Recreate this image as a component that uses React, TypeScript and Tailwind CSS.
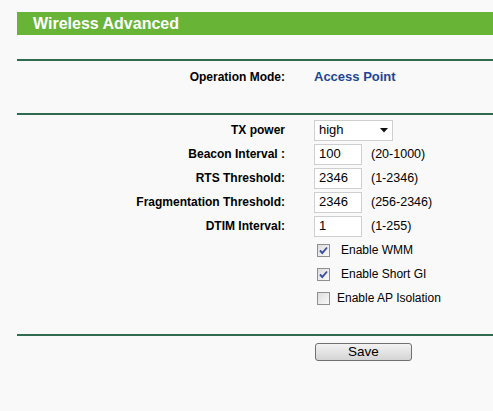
import React from "react";

const labelCls =
  "text-right text-[12px] font-bold text-black leading-[14px]";

function Input({ value }: { value: string }) {
  return (
    <div className="w-[48px] h-[21px] bg-white border border-[#cfcfcf] flex items-center pl-[4px] text-[13px] text-black">
      {value}
    </div>
  );
}

function Check({ checked }: { checked: boolean }) {
  return (
    <div className="w-[13px] h-[13px] border border-[#8f8f8f] bg-gradient-to-br from-[#dcdcdc] to-[#fafafa] flex items-center justify-center">
      {checked && (
        <svg width="11" height="11" viewBox="0 0 11 11">
          <path
            d="M2 5.5 L4.3 8 L9 2.5"
            fill="none"
            stroke="#3d4f9c"
            strokeWidth="1.9"
          />
        </svg>
      )}
    </div>
  );
}

export default function App() {
  const rows: { label: string; value: string; range: string }[] = [
    { label: "Beacon Interval :", value: "100", range: "(20-1000)" },
    { label: "RTS Threshold:", value: "2346", range: "(1-2346)" },
    { label: "Fragmentation Threshold:", value: "2346", range: "(256-2346)" },
    { label: "DTIM Interval:", value: "1", range: "(1-255)" },
  ];
  return (
    <div
      className="w-[493px] h-[411px] bg-[#f9f9f9] pl-[17px] pt-[12px] overflow-hidden"
      style={{ fontFamily: '"Liberation Sans", Arial, sans-serif' }}
    >
      <div className="h-[23px] bg-[#67b437] flex items-center pl-[16px] text-white text-[16px] font-bold">
        Wireless Advanced
      </div>
      <div className="mt-[24px] h-[2px] bg-[#2f6b4f]" />
      <div className="grid grid-cols-[268px_1fr] gap-x-[29px] h-[32px] items-center">
        <div className={labelCls}>Operation Mode:</div>
        <div className="text-[13px] font-bold text-[#1d4596]">Access Point</div>
      </div>
      <div className="mt-[20px] h-[2px] bg-[#2f6b4f]" />
      <div className="pt-[3px]">
        <div className="grid grid-cols-[268px_1fr] gap-x-[29px] h-[24px] items-center">
          <div className={labelCls}>TX power</div>
          <div className="w-[79px] h-[21px] bg-white border border-[#cfcfcf] flex items-center justify-between pl-[4px] pr-[4px] text-[13px] text-black">
            <span>high</span>
            <svg width="8" height="5" viewBox="0 0 8 5">
              <path d="M0 0 L8 0 L4 4.5 Z" fill="#111" />
            </svg>
          </div>
        </div>
        {rows.map((r) => (
          <div
            key={r.label}
            className="grid grid-cols-[268px_1fr] gap-x-[29px] h-[24px] items-center"
          >
            <div className={labelCls}>{r.label}</div>
            <div className="flex items-center gap-[9px]">
              <Input value={r.value} />
              <span className="text-[12.5px] text-black">{r.range}</span>
            </div>
          </div>
        ))}
        <div className="grid grid-cols-[268px_1fr] gap-x-[29px] h-[24px] items-center">
          <div />
          <div className="flex items-center pl-[3px]">
            <Check checked />
            <span className="ml-[11px] text-[12px] text-black">Enable WMM</span>
          </div>
        </div>
        <div className="grid grid-cols-[268px_1fr] gap-x-[29px] h-[24px] items-center">
          <div />
          <div className="flex items-center pl-[3px]">
            <Check checked />
            <span className="ml-[11px] text-[12px] text-black">Enable Short GI</span>
          </div>
        </div>
        <div className="grid grid-cols-[268px_1fr] gap-x-[29px] h-[24px] items-center">
          <div />
          <div className="flex items-center pl-[3px]">
            <Check checked={false} />
            <span className="ml-[7px] text-[12px] text-black">Enable AP Isolation</span>
          </div>
        </div>
      </div>
      <div className="mt-[24px] h-[2px] bg-[#2f6b4f]" />
      <div className="grid grid-cols-[268px_1fr] gap-x-[30px] mt-[7px]">
        <div />
        <button className="w-[97px] h-[18px] rounded-[3px] border border-[#707070] bg-gradient-to-b from-[#f3f3f3] to-[#d4d4d4] text-[13.5px] text-black leading-none flex items-center justify-center">
          Save
        </button>
      </div>
    </div>
  );
}
